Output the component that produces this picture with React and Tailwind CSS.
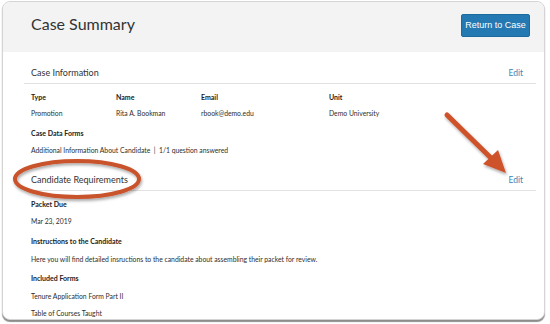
import React from "react";

const small = "text-[6.8px] leading-[12px] text-[#2e2e2e]";
const label = "text-[7px] leading-[12px] font-bold text-[#222]";

function SectionHeading({ title }) {
  return (
    <div className="flex items-center justify-between border-b border-[#e2e2e2] pl-[7px] pr-[13px] h-[21px]">
      <span className="text-[9px] leading-[20px] text-[#333]">
        {title}
      </span>
      <span className="text-[8.5px] leading-[20px] text-[#3b86b8]">Edit</span>
    </div>
  );
}

function Annotations() {
  return (
    <svg
      className="pointer-events-none absolute left-0 top-0"
      width="550"
      height="324"
      viewBox="0 0 550 324"
    >
      <defs>
        <filter id="sh" x="-20%" y="-20%" width="140%" height="160%">
          <feDropShadow dx="1" dy="2" stdDeviation="1.5" floodColor="#000" floodOpacity="0.35" />
        </filter>
      </defs>
      {/* ellipse around heading */}
      <ellipse
        cx="77"
        cy="179"
        rx="62"
        ry="18"
        fill="none"
        stroke="#c9522b"
        strokeWidth="4"
        filter="url(#sh)"
      />
      {/* arrow pointing at edit */}
      <g filter="url(#sh)">
        <line x1="447" y1="115" x2="491" y2="158" stroke="#cf5229" strokeWidth="5" strokeLinecap="round" />
        <polygon points="483,164 498,150 506,173" fill="#cf5229" />
      </g>
    </svg>
  );
}

export default function App() {
  return (
    <div className="relative w-[550px] h-[324px] bg-white overflow-hidden" style={{ fontFamily: "Lato, 'Open Sans', sans-serif" }}>
      <div className="ml-[2px] mt-[1px] w-[543px] h-[319px] rounded-[8px] border border-[#d4d4d4] bg-white overflow-hidden shadow-[0_2px_1px_rgba(0,0,0,0.45)]">
        {/* HEADER */}
        <div className="flex items-start justify-between h-[50px] bg-[#f3f3f3] pl-[28px] pr-[14px] pt-[11px]">
          <h1 className="text-[16px] leading-[22px] text-[#333]">
            Case Summary
          </h1>
          <button className="mt-[1px] h-[23px] w-[69px] rounded-[2px] border border-[#1d6a9e] bg-[#2479b2] text-[9px] text-white font-['Liberation_Sans',sans-serif]">
            Return to Case
          </button>
        </div>

        {/* BODY */}
        <div className="pl-[21px] pr-[8px]">
          <div className="mt-[11px]">
            <SectionHeading title="Case Information" />
          </div>

          <div className="pl-[7px]">
            <div className="mt-[7px] grid grid-cols-[85px_85px_128px_1fr]">
              <span className={label}>Type</span>
              <span className={label}>Name</span>
              <span className={label}>Email</span>
              <span className={label}>Unit</span>
            </div>
            <div className="mt-[4px] grid grid-cols-[85px_85px_128px_1fr]">
              <span className={small}>Promotion</span>
              <span className={small}>Rita A. Bookman</span>
              <span className={small}>rbook@demo.edu</span>
              <span className={small}>Demo University</span>
            </div>
            <p className={`${label} mt-[8px]`}>Case Data Forms</p>
            <p className={`${small} mt-[5px]`}>
              Additional Information About Candidate&nbsp; |&nbsp; 1/1 question answered
            </p>
          </div>

          <div className="mt-[14px]">
            <SectionHeading title="Candidate Requirements" />
          </div>

          <div className="pl-[7px]">
            <p className={`${label} mt-[7px]`}>Packet Due</p>
            <p className={`${small} mt-[5px]`}>Mar 23, 2019</p>
            <p className={`${label} mt-[8px]`}>Instructions to the Candidate</p>
            <p className={`${small} mt-[6px]`}>
              Here you will find detailed insructions to the candidate about assembling their packet for review.
            </p>
            <p className={`${label} mt-[7px]`}>Included Forms</p>
            <p className={`${small} mt-[6px]`}>Tenure Application Form Part II</p>
            <p className={`${small} mt-[5px]`}>Table of Courses Taught</p>
          </div>
        </div>
      </div>
      <Annotations />
    </div>
  );
}
